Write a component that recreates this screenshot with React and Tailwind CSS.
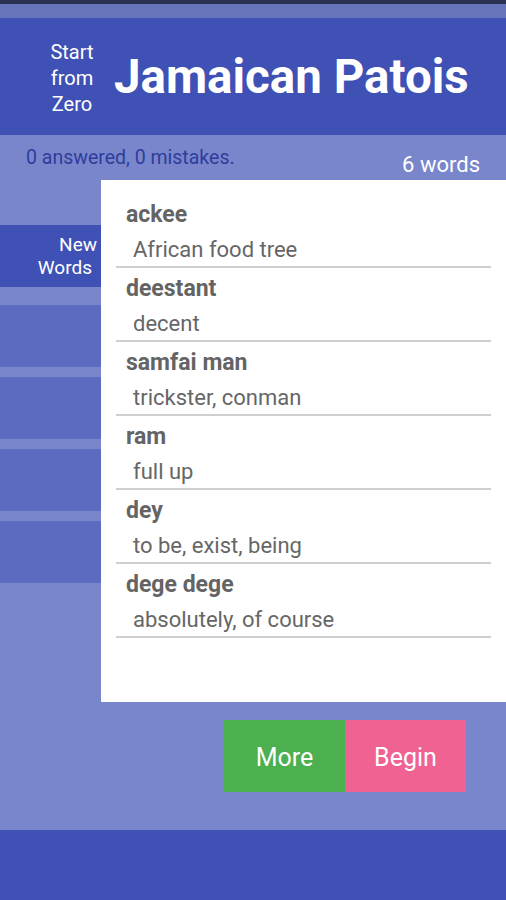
import React from "react";

const words = [
  { word: "ackee", meaning: "African food tree" },
  { word: "deestant", meaning: "decent" },
  { word: "samfai man", meaning: "trickster, conman" },
  { word: "ram", meaning: "full up" },
  { word: "dey", meaning: "to be, exist, being" },
  { word: "dege dege", meaning: "absolutely, of course" },
];

const WordRow = ({ word, meaning }) => (
  <div className="mx-[15px] border-b-2 border-[#cfcfcf] pt-[7px] pb-[2px]">
    <div className="pl-[10px] h-[28px] leading-[28px] text-[23px] font-bold text-[#646464]">{word}</div>
    <div className="pl-[17px] mt-[7px] h-[28px] leading-[28px] text-[22px] text-[#666666]">{meaning}</div>
  </div>
);

const App = () => {
  return (
    <div className="w-full h-[900px] flex flex-col bg-[#7986cb] overflow-hidden" style={{ fontFamily: "Roboto, 'Noto Sans', sans-serif" }}>
      <div className="h-[4px] bg-[#2d3252]" />
      <div className="h-[14px] bg-[#6674b9]" />

      <header className="h-[117px] bg-[#3f51b5] flex items-center text-white">
        <div className="w-[114px] flex flex-col items-center pl-[30px] text-[20px] leading-[26px] pt-[2px]">
          <span>Start</span>
          <span>from</span>
          <span>Zero</span>
        </div>
        <h1 className="text-[47.5px] font-bold leading-none pt-[3px]">Jamaican Patois</h1>
      </header>

      <div className="flex-1 flex flex-col">
        <div className="h-[45px] flex justify-between">
          <p className="pl-[26px] pt-[12px] text-[19.5px] leading-[22px] text-[#2f3d9c]">0 answered, 0 mistakes.</p>
          <p className="pr-[26px] pt-[17px] text-[22px] leading-[26px] text-white">6 words</p>
        </div>

        <div className="flex">
          <nav className="w-[101px] pt-[45px] flex flex-col">
            <div className="h-[62px] bg-[#3f51b5] text-white text-[19px] leading-[23px] flex flex-col items-end justify-center pr-[4px]">
              <span>New</span>
              <span className="pr-[5px]">Words</span>
            </div>
            <div className="mt-[18px] flex flex-col gap-[10px]">
              <div className="h-[62px] bg-[#5c6bc0]" />
              <div className="h-[62px] bg-[#5c6bc0]" />
              <div className="h-[62px] bg-[#5c6bc0]" />
              <div className="h-[62px] bg-[#5c6bc0]" />
            </div>
          </nav>

          <section className="flex-1 h-[522px] bg-white pt-[14px]">
            {words.map((w) => (
              <WordRow key={w.word} word={w.word} meaning={w.meaning} />
            ))}
          </section>
        </div>

        <div className="flex justify-end pr-[40px] mt-[18px]">
          <button className="w-[121px] h-[72px] bg-[#4caf50] text-white text-[25px] pt-[3px]">More</button>
          <button className="w-[121px] h-[72px] bg-[#f06292] text-white text-[25px] pt-[3px]">Begin</button>
        </div>
      </div>

      <footer className="h-[70px] bg-[#3f51b5]" />
    </div>
  );
};

export default App;
